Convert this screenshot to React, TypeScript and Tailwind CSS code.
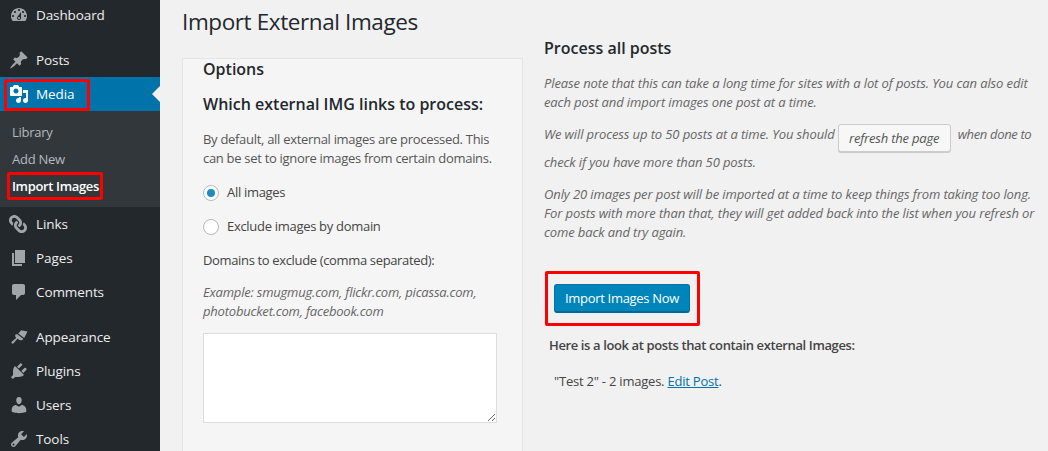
import React from 'react';
import { FaLink } from 'react-icons/fa';

const icons: Record<string, string> = {
    dashboard: 'M3.76 16h12.48c1.1-1.37 1.76-3.11 1.76-5 0-4.42-3.58-8-8-8s-8 3.58-8 8c0 1.89.66 3.63 1.76 5zM10 4c.55 0 1 .45 1 1s-.45 1-1 1-1-.45-1-1 .45-1 1-1zM6 6c.55 0 1 .45 1 1s-.45 1-1 1-1-.45-1-1 .45-1 1-1zm8 0c.55 0 1 .45 1 1s-.45 1-1 1-1-.45-1-1 .45-1 1-1zm-5.37 5.55L12 7v6c0 1.1-.9 2-2 2s-2-.9-2-2c0-.57.24-1.08.63-1.45zM4 10c.55 0 1 .45 1 1s-.45 1-1 1-1-.45-1-1 .45-1 1-1zm12 0c.55 0 1 .45 1 1s-.45 1-1 1-1-.45-1-1 .45-1 1-1zm-5 3c0-.55-.45-1-1-1s-1 .45-1 1 .45 1 1 1 1-.45 1-1z',
    posts: 'M10.44 3.02l1.82-1.82 6.36 6.35-1.83 1.82c-1.05-.68-2.48-.57-3.41.36l-.75.75c-.92.93-1.04 2.35-.35 3.41l-1.83 1.82-2.41-2.41-2.8 2.79c-.42.42-3.38 2.71-3.8 2.29s1.86-3.39 2.28-3.81l2.79-2.79L4.1 9.36l1.83-1.82c1.05.69 2.48.57 3.4-.36l.75-.75c.93-.92 1.05-2.35.36-3.41z',
    media: 'M13 11V4c0-.55-.45-1-1-1h-1.67L9 1H5L3.67 3H2c-.55 0-1 .45-1 1v7c0 .55.45 1 1 1h10c.55 0 1-.45 1-1zM7 4.5c1.38 0 2.5 1.12 2.5 2.5S8.38 9.5 7 9.5 4.5 8.38 4.5 7 5.62 4.5 7 4.5zM14 6h5v10.5c0 1.38-1.12 2.5-2.5 2.5S14 17.88 14 16.5s1.12-2.5 2.5-2.5c.17 0 .34.02.5.05V9h-3V6zm-4 8.05V13h2v3.5c0 1.38-1.12 2.5-2.5 2.5S7 17.88 7 16.5 8.12 14 9.5 14c.17 0 .34.02.5.05z',
    pages: 'M6 15V2h10v13H6zm-1 1h8v2H3V5h2v11z',
    comments: 'M5 2h9c1.1 0 2 .9 2 2v7c0 1.1-.9 2-2 2h-2l-5 5v-5H5c-1.1 0-2-.9-2-2V4c0-1.1.9-2 2-2z',
    appearance: 'M12.2 3.2l6.3 1.3-3.3 6.6-6-4.7zM8.3 7.2l6.2 4.8-1.3 1c-1 .7-2.2.3-3.2-.3l-1.5-1-1.2 1.3-2.7 3.3c-.7.8-2.1.3-2.1-.7 0-.4.2-.7.5-1l3-2.6 1.2-1.1-.7-1c-.6-.9-.5-1.9.4-2.6z',
    plugins: 'M13.11 4.36L9.87 7.6 8 5.73l3.24-3.24c.35-.34 1.05-.2 1.56.32.52.51.66 1.21.31 1.55zm-8 1.77l.91-1.12 9.01 9.01-1.19.84c-.71.71-2.63 1.16-3.82 1.16H6.14L4.9 17.26c-.59.59-1.54.59-2.12 0-.59-.58-.59-1.53 0-2.12l1.24-1.24v-3.88c0-1.13.4-3.19 1.09-3.89zm7.26 3.97l3.24-3.24c.34-.35 1.04-.21 1.55.31.52.51.66 1.21.31 1.55l-3.24 3.25z',
    users: 'M10 9.25c-2.27 0-2.73-3.44-2.73-3.44C7 4.02 7.82 2 9.97 2c2.16 0 2.98 2.02 2.71 3.81 0 0-.41 3.44-2.68 3.44zm0 2.57L12.72 10c2.39 0 4.52 2.33 4.52 4.53v2.49s-3.65 1.13-7.24 1.13c-3.65 0-7.24-1.13-7.24-1.13v-2.49c0-2.25 1.94-4.48 4.15-4.48z',
    tools: 'M16.68 9.77c-1.34 1.34-3.3 1.67-4.95.99l-5.41 6.52c-.99.99-2.59.99-3.58 0s-.99-2.59 0-3.57l6.52-5.42c-.68-1.65-.35-3.61.99-4.95 1.28-1.28 3.12-1.62 4.72-1.06l-2.89 2.89 2.82 2.82 2.86-2.87c.53 1.58.18 3.39-1.08 4.65zM3.81 16.21c.4.39 1.04.39 1.43 0 .4-.4.4-1.04 0-1.43-.39-.4-1.03-.4-1.43 0-.39.39-.39 1.03 0 1.43z',
};

function MenuIcon({ name, active }: { name: string; active?: boolean }) {
    if (name === 'links') {
        return <FaLink className="w-[18px] h-[18px] text-[#a0a5aa] -scale-x-100" />;
    }
    return (
        <svg viewBox="0 0 20 20" className={`w-5 h-5 ${active ? 'text-white' : 'text-[#a0a5aa]'}`} fill="currentColor">
            <path d={icons[name]} />
        </svg>
    );
}

function MenuItem({ icon, label }: { icon: string; label: string }) {
    return (
        <div className="h-[34px] shrink-0 flex items-center text-[#eeeeee] text-[13.5px] tracking-[-0.1px]">
            <div className="w-9 pl-[9px] flex items-center shrink-0">
                <MenuIcon name={icon} />
            </div>
            <span>{label}</span>
        </div>
    );
}

function Sidebar() {
    return (
        <div className="w-40 shrink-0 bg-[#23282d] flex flex-col">
            <div className="-mt-[2px] shrink-0">
                <MenuItem icon="dashboard" label="Dashboard" />
            </div>
            <div className="h-[11px] shrink-0" />
            <MenuItem icon="posts" label="Posts" />

            <div className="relative h-[34px] flex items-center bg-[#0073aa] text-white text-[13.5px] tracking-[-0.1px] shrink-0">
                <div className="w-9 pl-[9px] flex items-center shrink-0">
                    <MenuIcon name="media" active />
                </div>
                <span>Media</span>
                <div className="absolute right-0 top-[9px] border-y-[8px] border-r-[8px] border-y-transparent border-r-[#f1f1f1]" />
                <div className="absolute left-1 top-[2px] w-[86px] h-[32px] border-[3px] border-[#ff0000] rounded-[2px]" />
            </div>

            <div className="bg-[#32373c] pt-[8px] pb-[7px] text-[13px] tracking-[-0.25px] text-[#b4b9be] shrink-0">
                <div className="h-[27px] pl-3 flex items-center">Library</div>
                <div className="h-[27px] pl-3 flex items-center">Add New</div>
                <div className="relative h-[27px] pl-3 flex items-center text-white font-semibold tracking-[-0.35px]">
                    Import Images
                    <div className="absolute left-[7px] top-[-1px] w-[96px] h-[28px] border-[3px] border-[#ff0000] rounded-[2px]" />
                </div>
            </div>

            <MenuItem icon="links" label="Links" />
            <MenuItem icon="pages" label="Pages" />
            <MenuItem icon="comments" label="Comments" />
            <div className="h-[11px] shrink-0" />
            <MenuItem icon="appearance" label="Appearance" />
            <MenuItem icon="plugins" label="Plugins" />
            <MenuItem icon="users" label="Users" />
            <MenuItem icon="tools" label="Tools" />
        </div>
    );
}

function Radio({ checked, label }: { checked?: boolean; label: string }) {
    return (
        <div className="h-[34px] flex items-center gap-2 text-[#444444] tracking-[-0.3px]">
            <span className="w-4 h-4 rounded-full bg-white border border-[#b4b9be] flex items-center justify-center">
                {checked && <span className="w-2 h-2 rounded-full bg-[#1e8cbe]" />}
            </span>
            <span>{label}</span>
        </div>
    );
}

function OptionsCard() {
    return (
        <div className="w-[341px] flex-1 bg-[#f5f5f5] border border-[#e5e5e5] border-b-0 pl-[20px] pr-[25px] text-[13px] text-[#444444]">
            <h2 className="text-[16px] leading-[20px] font-semibold text-[#23282d]">Options</h2>
            <h3 className="mt-[15px] text-[16px] leading-[20px] font-semibold text-[#23282d] whitespace-nowrap">
                Which external IMG links to process:
            </h3>
            <p className="mt-[16px] leading-[19px] whitespace-nowrap text-[#555555] tracking-[-0.3px]">
                By default, all external images are processed. This
                <br />
                can be set to ignore images from certain domains.
            </p>
            <div className="mt-[8px]">
                <Radio checked label="All images" />
                <Radio label="Exclude images by domain" />
            </div>
            <p className="mt-[6px] leading-[20px] tracking-[-0.35px]">Domains to exclude (comma separated):</p>
            <p className="mt-[13px] leading-[19px] italic text-[#666666] whitespace-nowrap tracking-[-0.2px]">
                Example: smugmug.com, flickr.com, picassa.com,
                <br />
                photobucket.com, facebook.com
            </p>
            <textarea className="block mt-[12px] w-[294px] h-[90px] bg-white border border-[#dddddd]" readOnly />
        </div>
    );
}

function ProcessColumn() {
    return (
        <div className="ml-[21px] pt-[38px] text-[13px] text-[#444444] w-[490px]">
            <h2 className="text-[16px] leading-[20px] font-semibold text-[#23282d]">Process all posts</h2>
            <div className="italic text-[#666666] tracking-[-0.11px]">
                <p className="mt-[16px] leading-[19px] whitespace-nowrap">
                    Please note that this can take a long time for sites with a lot of posts. You can also edit
                    <br />
                    each post and import images one post at a time.
                </p>
                <div className="mt-[12px] flex items-start h-[28px] leading-[20px] whitespace-nowrap">
                    <span>We will process up to 50 posts at a time. You should</span>
                    <button className="ml-[3px] mr-[7px] w-[113px] h-[28px] bg-[#f7f7f7] border border-[#cccccc] rounded-[3px] shadow-[0_1px_0_#cccccc] text-[#555555] italic tracking-[-0.2px]">
                        refresh the page
                    </button>
                    <span className="tracking-[-0.35px]">when done to</span>
                </div>
                <p className="mt-[1px] leading-[19px]">check if you have more than 50 posts.</p>
                <p className="mt-[13px] leading-[19px] whitespace-nowrap">
                    Only 20 images per post will be imported at a time to keep things from taking too long.
                    <br />
                    For posts with more than that, they will get added back into the list when you refresh or
                    <br />
                    come back and try again.
                </p>
            </div>
            <div className="mt-[29px] ml-[1px] w-[155px] h-[55px] border-[3px] border-[#ff0000] rounded-[2px] flex items-center pl-[6px]">
                <button className="w-[136px] h-[29px] pt-[1px] bg-[#0085ba] border border-[#0073aa] border-b-[2px] border-b-[#006799] rounded-[3px] text-white tracking-[-0.3px]">
                    Import Images Now
                </button>
            </div>
            <p className="mt-[9px] ml-[5px] leading-[20px] font-semibold text-[#444444] tracking-[-0.38px] whitespace-nowrap">
                Here is a look at posts that contain external Images:
            </p>
            <p className="mt-[16px] ml-[10px] leading-[20px] tracking-[-0.22px]">
                "Test 2" - 2 images. <a className="text-[#0073aa] underline">Edit Post</a>.
            </p>
        </div>
    );
}

export default function App() {
    return (
        <div className="w-[1048px] h-[451px] overflow-hidden flex bg-[#f1f1f1] font-['Open_Sans','Noto_Sans',sans-serif]">
            <Sidebar />
            <div className="flex-1 flex pl-[22px] min-w-0">
                <div className="flex flex-col shrink-0">
                    <h1 className="text-[22.5px] leading-[29px] tracking-[-0.4px] text-[#23282d] mt-[7px] mb-[22px] whitespace-nowrap">Import External Images</h1>
                    <OptionsCard />
                </div>
                <ProcessColumn />
            </div>
        </div>
    );
}
